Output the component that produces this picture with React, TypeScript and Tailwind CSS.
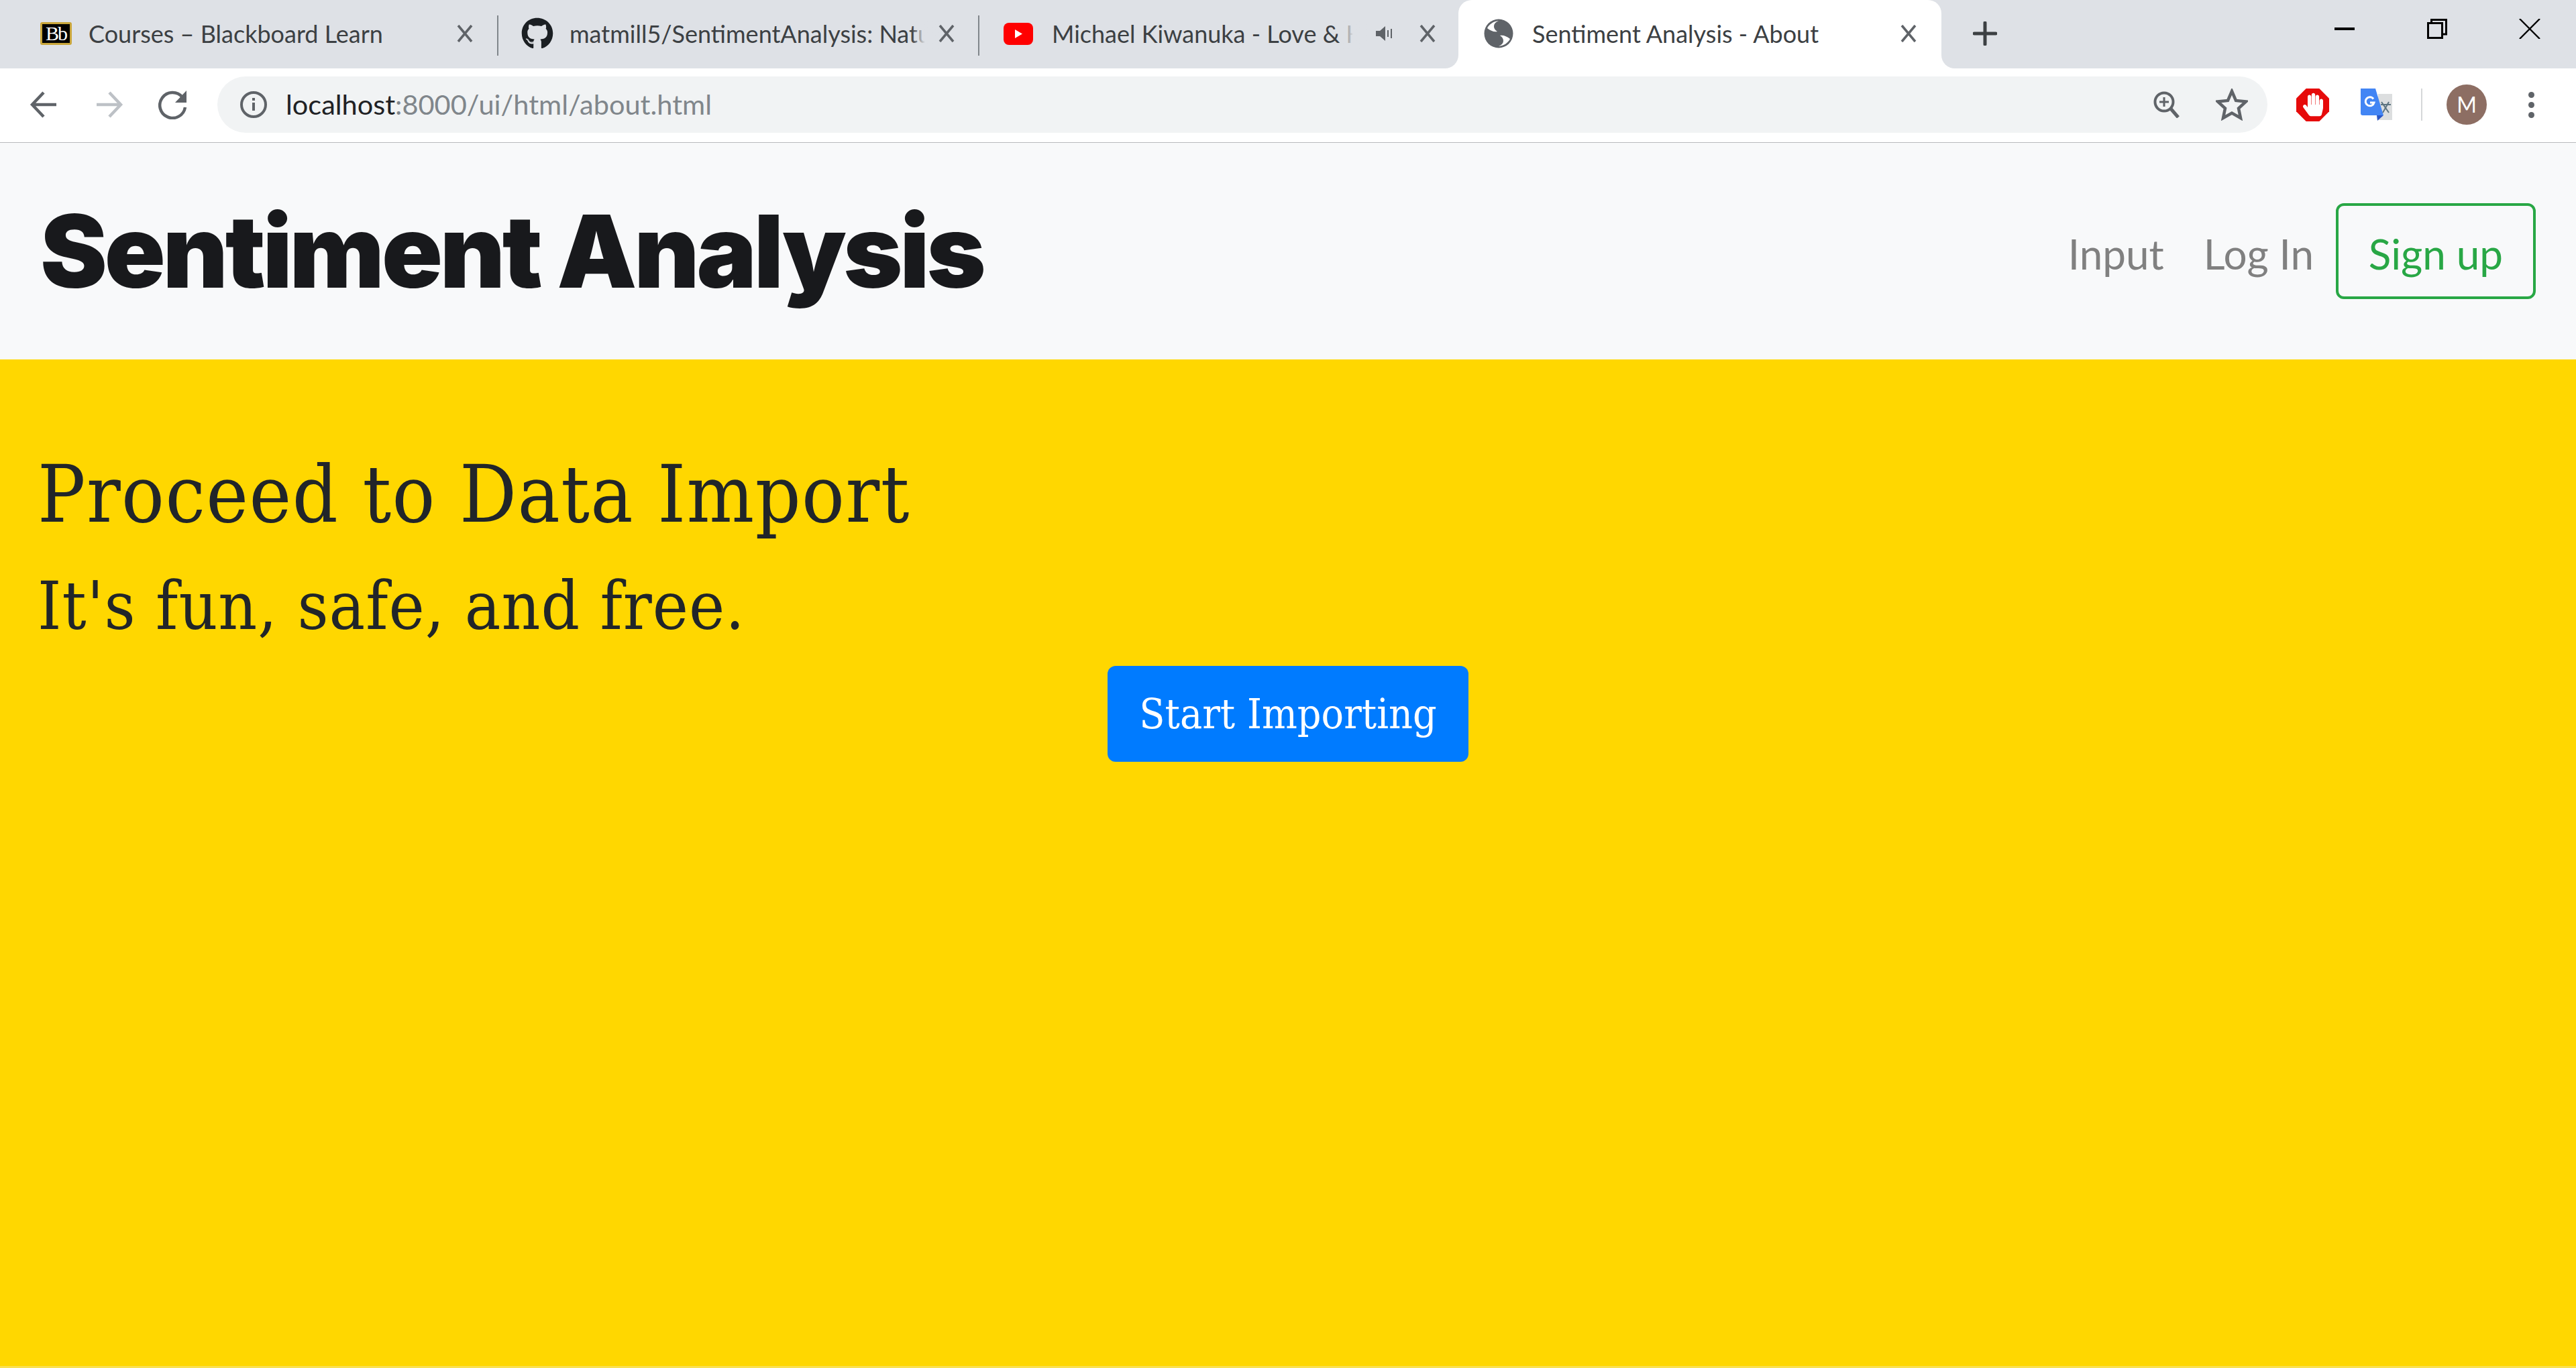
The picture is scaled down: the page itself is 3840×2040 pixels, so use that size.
import { FaGithub, FaHandPaper } from "react-icons/fa";

const sans = "font-['Lato','Open_Sans',sans-serif]";
const slab = "font-['DejaVu_Serif_Condensed','DejaVu_Serif',serif]";

const CloseIcon = () => (
  <svg width="24" height="26" viewBox="0 0 24 26" className="shrink-0 text-[#5f6368]">
    <path d="M2 1 L22 25 M22 1 L2 25" stroke="currentColor" strokeWidth="3.6" fill="none" />
  </svg>
);

const Favicon = ({ name }: { name: string }) => {
  if (name === "bb") {
    return (
      <div className="w-[47px] h-[34px] flex items-center justify-center bg-black border-[3px] border-[#c9a63b] rounded-[3px] text-white text-[30px] leading-none font-['Liberation_Serif',serif] tracking-[-2px]">
        Bb
      </div>
    );
  }
  if (name === "gh") {
    return <FaGithub className="w-[48px] h-[48px] text-[#1b1f23]" />;
  }
  if (name === "yt") {
    return (
      <svg width="44" height="33" viewBox="0 0 44 33">
        <rect width="44" height="33" rx="8" fill="#f00" />
        <path d="M17 10 L28 16.500 L17 23 Z" fill="#fff" />
      </svg>
    );
  }
  // default page globe
  return (
    <svg width="44" height="44" viewBox="0 0 44 44">
      <circle cx="22" cy="22" r="21.500" fill="#5f6368" />
      <path d="M22 3 C13 6 13 15 20 19 C15 20 10 18 5 14 C8 8 14 4 22 3 Z" fill="#fff" />
      <path d="M22 41 C31 38 31 29 24 25 C29 24 34 26 39 30 C36 36 30 40 22 41 Z" fill="#fff" />
    </svg>
  );
};

const Tab = ({
  title,
  icon,
  className,
  fade,
  audio,
  active,
}: {
  title: string;
  icon: string;
  className: string;
  fade?: boolean;
  audio?: boolean;
  active?: boolean;
}) => (
  <div className={`${className} h-[102px] shrink-0 relative flex items-center pb-[2px] ${active ? "bg-white rounded-t-[20px]" : ""}`}>
    {active && (
      <>
        <span className="absolute bottom-0 left-[-20px] w-[20px] h-[20px] bg-white">
          <span className="block w-full h-full bg-[#dee1e6] rounded-br-[20px]" />
        </span>
        <span className="absolute bottom-0 right-[-20px] w-[20px] h-[20px] bg-white">
          <span className="block w-full h-full bg-[#dee1e6] rounded-bl-[20px]" />
        </span>
      </>
    )}
    <div className="w-[48px] shrink-0 flex items-center">
      <Favicon name={icon} />
    </div>
    <div className={`ml-[24px] flex-1 min-w-0 relative h-[46px] leading-[46px] whitespace-nowrap text-[36px] text-[#3c4043] ${sans}`}>
      {title}
      {fade && <span className="absolute right-0 top-0 bottom-0 w-[40px] bg-gradient-to-r from-transparent via-[#dee1e6] to-[#dee1e6]" />}
    </div>
    {audio && (
      <svg width="30" height="30" viewBox="0 0 30 30" className="shrink-0 ml-[12px] mr-[37px]">
        <path d="M2 11 H8 L16 4 V26 L8 19 H2 Z" fill="#5f6368" />
        <path d="M20 10 V20 M25 8 V22" stroke="#5f6368" strokeWidth="2" />
      </svg>
    )}
    <CloseIcon />
  </div>
);

const Separator = () => <div className="w-[2px] h-[60px] mt-[4px] bg-[#80868b] shrink-0" />;

export default function App() {
  return (
    <div className="w-[3840px] h-[2040px] flex flex-col overflow-hidden bg-[#ffd700]">
      {/* tab strip */}
      <div className="h-[102px] shrink-0 bg-[#dee1e6] flex items-center">
        <Tab title="Courses – Blackboard Learn" icon="bb" className="w-[741px] pl-[60px] pr-[36px]" />
        <Separator />
        <Tab title="matmill5/SentimentAnalysis: Natu" icon="gh" className="w-[715px] pl-[34px] pr-[35px]" fade />
        <Separator />
        <Tab title="Michael Kiwanuka - Love & H" icon="yt" className="w-[714px] pl-[36px] pr-[34px]" fade audio />
        <Tab title="Sentiment Analysis - About" icon="globe" className="w-[720px] pl-[38px] pr-[37px]" active />
        <svg width="36" height="36" viewBox="0 0 36 36" className="ml-[47px] mb-[2px] shrink-0">
          <path d="M18 2 V34 M2 18 H34" stroke="#3c4043" strokeWidth="5" strokeLinecap="round" />
        </svg>
        <div className="ml-auto flex items-center h-full pb-[16px]">
          <svg width="30" height="4" viewBox="0 0 30 4" className="mr-[108px]">
            <rect width="30" height="4" fill="#000" />
          </svg>
          <svg width="30" height="30" viewBox="0 0 30 30" className="mr-[107px]" fill="none" stroke="#000" strokeWidth="3">
            <rect x="1.500" y="6.500" width="21" height="22" />
            <path d="M6.500 6.500 V1.500 H28.500 V23 H22.500" />
          </svg>
          <svg width="32" height="30" viewBox="0 0 32 30" className="mr-[53px]" fill="none" stroke="#000" strokeWidth="2.400">
            <path d="M1 0 L31 30 M31 0 L1 30" />
          </svg>
        </div>
      </div>

      {/* toolbar */}
      <div className="h-[111px] shrink-0 bg-white border-b-[1px] border-[#b8babc] flex items-center pb-[2px]">
        <svg width="44" height="44" viewBox="0 0 44 44" className="ml-[44px] shrink-0" fill="none" stroke="#5f6368" strokeWidth="4.500">
          <path d="M40 22 H5 M21 4 L4 22 L21 40" />
        </svg>
        <svg width="44" height="44" viewBox="0 0 44 44" className="ml-[52px] shrink-0" fill="none" stroke="#bdc1c6" strokeWidth="4.500">
          <path d="M4 22 H39 M23 4 L40 22 L23 40" />
        </svg>
        <svg width="44" height="44" viewBox="0 0 44 44" className="ml-[52px] shrink-0" fill="none">
          <path d="M36 11 A19 19 0 1 0 40 26" stroke="#5f6368" strokeWidth="4.500" />
          <path d="M42 1 V19 H25 Z" fill="#5f6368" />
        </svg>
        <div className="ml-[44px] w-[3056px] h-[84px] rounded-full bg-[#f1f3f4] flex items-center pl-[34px]">
          <svg width="40" height="40" viewBox="0 0 40 40" className="shrink-0" fill="none">
            <circle cx="20" cy="20" r="18" stroke="#5f6368" strokeWidth="4" />
            <rect x="18" y="17" width="4" height="12" fill="#5f6368" />
            <rect x="18" y="10" width="4" height="4" fill="#5f6368" />
          </svg>
          <div className={`ml-[28px] mb-[2px] text-[41.5px] text-[#80868b] ${sans}`}>
            <span className="text-[#202124]">localhost</span>:8000/ui/html/about.html
          </div>
          <svg width="40" height="40" viewBox="0 0 40 40" className="ml-auto shrink-0" fill="none" stroke="#5f6368">
            <circle cx="16" cy="16" r="13.500" strokeWidth="4" />
            <path d="M25 25 L37 39" strokeWidth="5" />
            <path d="M16 9 V23 M9 16 H23" strokeWidth="3" />
          </svg>
          <svg width="48" height="48" viewBox="0 0 48 48" className="ml-[53px] mr-[29px] shrink-0" fill="none" stroke="#5f6368" strokeWidth="4.500">
            <path d="M24 4 L30 18 L45 19.500 L34 29.500 L37 44 L24 36.500 L11 44 L14 29.500 L3 19.500 L18 18 Z" />
          </svg>
        </div>
        <div className="ml-[43px] relative w-[49px] h-[49px] shrink-0 flex items-center justify-center">
          <svg width="49" height="49" viewBox="0 0 50 50" className="absolute inset-0">
            <path d="M15 0 H35 L50 15 V35 L35 50 H15 L0 35 V15 Z" fill="#e60b0b" />
          </svg>
          <FaHandPaper className="relative w-[30px] h-[36px] text-white" />
        </div>
        <svg width="47" height="48" viewBox="0 0 47 48" className="ml-[47px] shrink-0">
          <rect x="26" y="8" width="21" height="39" fill="#dcdedf" />
          <path d="M0 0 H22 L34 40 H3 Q0 40 0 37 Z" fill="#4285f4" />
          <path d="M24 40 H34 L25 48 Z" fill="#2a56c6" />
          <path d="M31 20 L42 36 M42 20 L33 36 M30 24 H45" stroke="#5d7480" strokeWidth="2" fill="none" />
          <path d="M19 15.500 A6.500 6.500 0 1 0 20 21 H14" stroke="#fff" strokeWidth="3" fill="none" />
        </svg>
        <div className="ml-[43px] w-[2px] h-[48px] bg-[#d5d7d9] shrink-0" />
        <div className={`ml-[36px] w-[60px] h-[60px] shrink-0 rounded-full bg-[#8d6e63] text-white text-[32px] flex items-center justify-center ${sans}`}>
          M
        </div>
        <div className="ml-[62px] flex flex-col gap-[6px] shrink-0">
          <span className="w-[9px] h-[9px] rounded-full bg-[#5f6368]" />
          <span className="w-[9px] h-[9px] rounded-full bg-[#5f6368]" />
          <span className="w-[9px] h-[9px] rounded-full bg-[#5f6368]" />
        </div>
      </div>

      {/* navbar */}
      <nav className="h-[323px] shrink-0 bg-[#f8f9fa] flex items-center pl-[60px] pr-[60px]">
        <div className="text-[150px] leading-none font-black text-[#18191c] font-['Inter',sans-serif] tracking-[-4.2px]">
          Sentiment Analysis
        </div>
        <div className={`ml-auto flex items-center text-[62px] text-[#808080] ${sans}`}>
          <span className="pt-[8px]">Input</span>
          <span className="ml-[59px] pt-[8px]">Log In</span>
          <span className="ml-[33px] w-[298px] h-[143px] pt-[8px] border-[4px] border-[#28a745] rounded-[12px] text-[#28a745] flex items-center justify-center">
            Sign up
          </span>
        </div>
      </nav>

      {/* jumbotron */}
      <main className={`flex-1 border-b-[3px] border-[#fae04f] px-[56px] pt-[142px] text-[#212529] ${slab}`}>
        <h1 className="text-[118px] leading-none h-[162px] tracking-[1.450px]">Proceed to Data Import</h1>
        <p className="text-[100px] leading-none h-[145px] pt-[14px] tracking-[1px]">It's fun, safe, and free.</p>
        <div className="flex justify-center mt-[8px]">
          <button className="w-[538px] h-[143px] bg-[#007bff] text-white text-[62px] rounded-[12px]">
            Start Importing
          </button>
        </div>
      </main>
    </div>
  );
}
